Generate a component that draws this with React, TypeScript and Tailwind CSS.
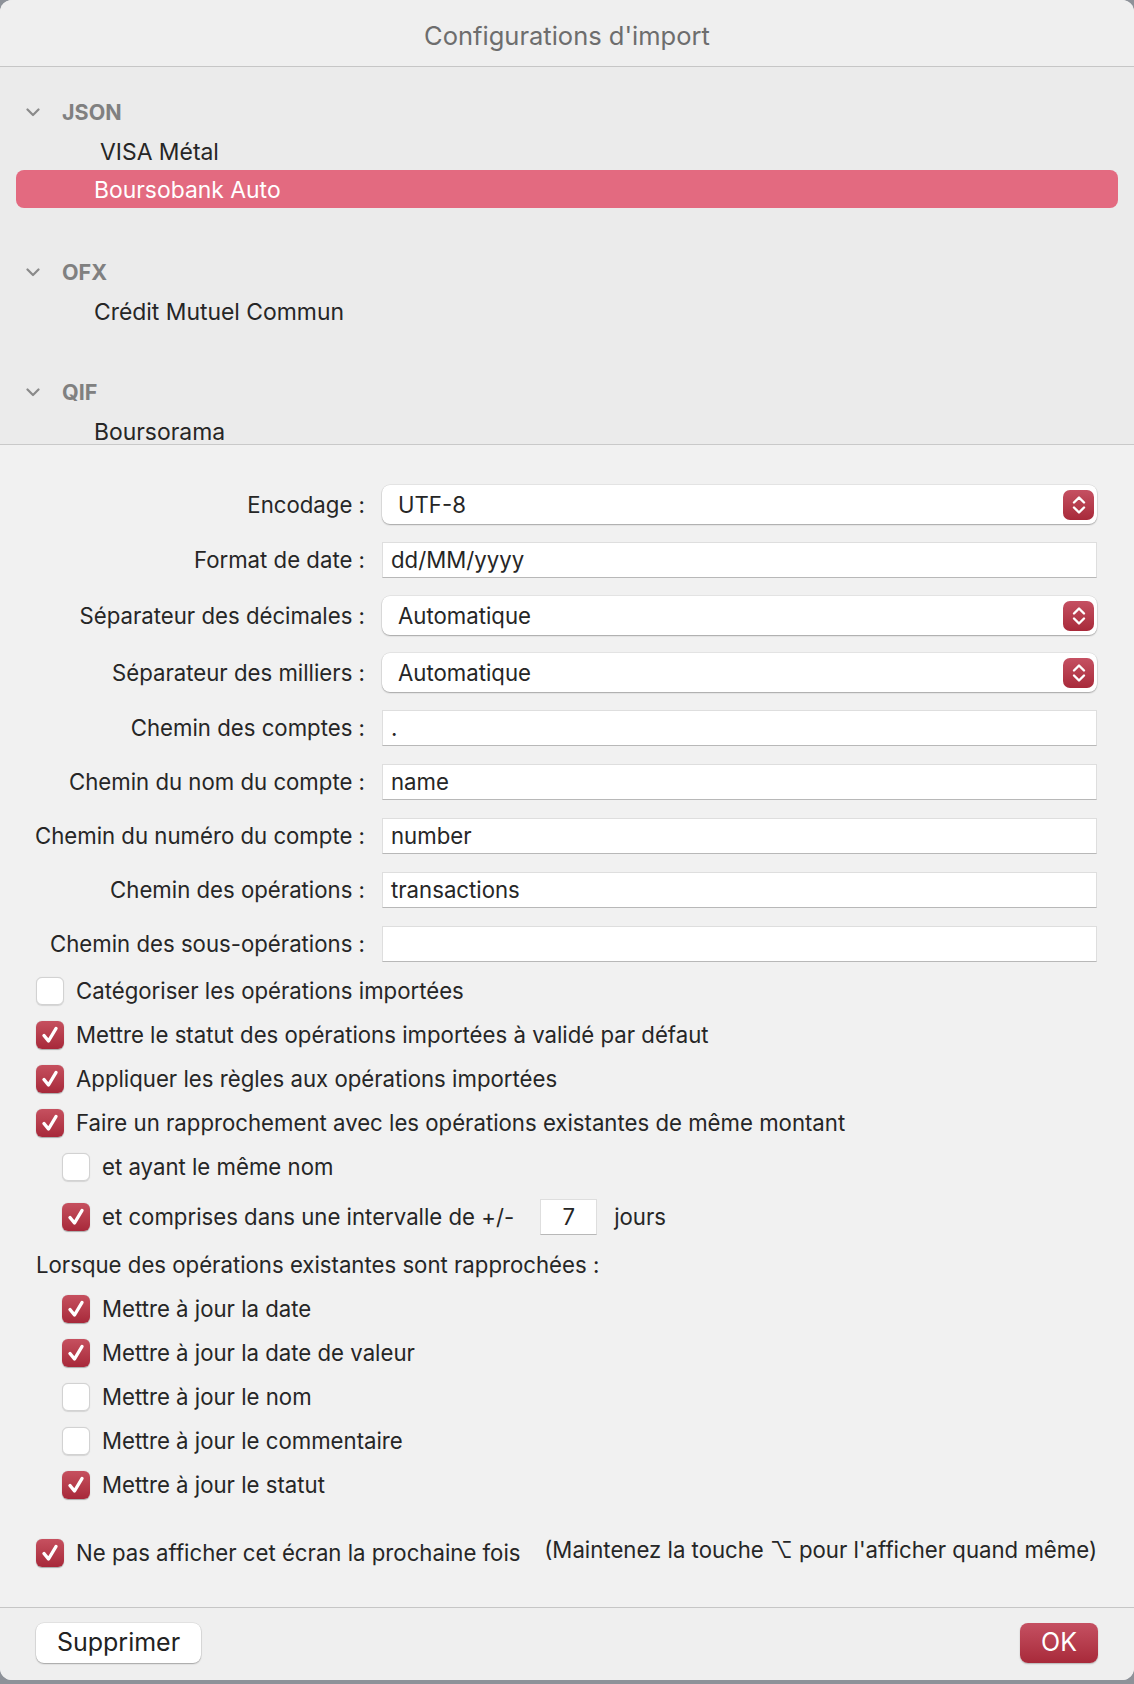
import { useState } from "react";

type Group = { name: string; items: string[] };

const groups: Group[] = [
  { name: "JSON", items: ["VISA Métal", "Boursobank Auto"] },
  { name: "OFX", items: ["Crédit Mutuel Commun"] },
  { name: "QIF", items: ["Boursorama"] },
];

const font = { fontFamily: "Inter, 'Noto Sans', 'DejaVu Sans', sans-serif" };

function Chevron() {
  return (
    <svg width="14" height="9" viewBox="0 0 14 9" className="shrink-0">
      <path
        d="M1.5 1.5 L7 7 L12.5 1.5"
        fill="none"
        stroke="#8a8a8a"
        strokeWidth="2.2"
        strokeLinecap="round"
        strokeLinejoin="round"
      />
    </svg>
  );
}

function Stepper() {
  return (
    <div className="absolute right-[3px] top-1/2 -translate-y-1/2 flex h-[30px] w-[31px] items-center justify-center rounded-[7px] bg-gradient-to-b from-[#c55062] to-[#a8293a]">
      <svg width="14" height="20" viewBox="0 0 14 20">
        <path
          d="M2 7.5 L7 2.5 L12 7.5 M2 12.5 L7 17.5 L12 12.5"
          fill="none"
          stroke="white"
          strokeWidth="2.4"
          strokeLinecap="round"
          strokeLinejoin="round"
        />
      </svg>
    </div>
  );
}

function Select({ value }: { value: string }) {
  return (
    <div className="relative flex h-[39px] flex-1 items-center rounded-[8px] bg-white pl-[16px] text-[22.2px] text-[#262626] shadow-[0_1px_1.5px_rgba(0,0,0,0.28),0_0_0_0.5px_rgba(0,0,0,0.1)]">
      {value}
      <Stepper />
    </div>
  );
}

function TextField({ value }: { value: string }) {
  return (
    <div className="flex h-[36px] flex-1 items-center border border-[#dedede] border-b-[#b8b8b8] bg-white pl-[8px] text-[22.2px] text-[#262626]">
      {value}
    </div>
  );
}

function Checkbox({ checked }: { checked: boolean }) {
  if (checked) {
    return (
      <div className="flex h-[28px] w-[28px] shrink-0 items-center justify-center rounded-[6px] bg-gradient-to-b from-[#c6505f] to-[#a7283a] shadow-[0_0.5px_1px_rgba(0,0,0,0.3)]">
        <svg width="22" height="22" viewBox="0 0 22 22">
          <path
            d="M5 11.5 L9.5 17 L17 4.5"
            fill="none"
            stroke="white"
            strokeWidth="3.4"
            strokeLinecap="round"
            strokeLinejoin="round"
          />
        </svg>
      </div>
    );
  }
  return (
    <div className="h-[28px] w-[28px] shrink-0 rounded-[6px] border border-[#d2d2d2] bg-white shadow-[0_0.5px_1px_rgba(0,0,0,0.12)]" />
  );
}

function CheckRow({
  label,
  checked,
  indent = false,
}: {
  label: string;
  checked: boolean;
  indent?: boolean;
}) {
  return (
    <div className={`flex h-[28px] items-center gap-[12px] ${indent ? "pl-[26px]" : ""}`}>
      <Checkbox checked={checked} />
      <span className="whitespace-nowrap text-[22.2px] text-[#262626]">{label}</span>
    </div>
  );
}

function FormRow({ label, children }: { label: string; children: React.ReactNode }) {
  return (
    <div className="flex items-center gap-[17px]">
      <div className="flex w-[329px] shrink-0 justify-end">
        <span className="whitespace-nowrap text-[22.2px] text-[#262626]">{label}</span>
      </div>
      {children}
    </div>
  );
}

export default function App() {
  const [selected, setSelected] = useState("Boursobank Auto");

  return (
    <div className="h-[1684px] w-[1134px] bg-[#8e9299]" style={font}>
      <div className="flex h-[1680px] flex-col overflow-hidden rounded-[12px] bg-[#f1f1f1]">
        {/* title bar */}
        <div className="flex h-[67px] shrink-0 items-center justify-center border-b border-[#c6c6c6] bg-[#efefef] pt-[6px] text-[25.5px] text-[#6d6d6d]">
          Configurations d'import
        </div>

        {/* list of saved configurations */}
        <div className="h-[378px] shrink-0 overflow-hidden border-b border-[#c9c9c9] bg-[#ebebeb] px-[16px] pt-[25px]">
          {groups.map((g, gi) => (
            <div key={g.name} className={gi === 1 ? "mt-[44px]" : gi === 2 ? "mt-[42px]" : ""}>
              <div className="flex h-[40px] items-center gap-[22px] pl-[10px]">
                <Chevron />
                <span className="text-[21.5px] font-bold text-[#808080]">{g.name}</span>
              </div>
              {g.items.map((item) => {
                const active = item === selected;
                return (
                  <div
                    key={item}
                    onClick={() => setSelected(item)}
                    className={`flex h-[38px] items-center rounded-[8px] pt-[2px] text-[22.9px] ${
                      item === "VISA Métal" ? "pl-[84px]" : "pl-[78px]"
                    } ${active ? "bg-[#e36a80] text-white" : "text-[#262626]"}`}
                  >
                    {item}
                  </div>
                );
              })}
            </div>
          ))}
        </div>

        {/* options */}
        <div className="flex flex-1 flex-col pl-[36px] pr-[37px] pt-[40px]">
          <div className="flex flex-col gap-[18px]">
            <FormRow label="Encodage :">
              <Select value="UTF-8" />
            </FormRow>
            <FormRow label="Format de date :">
              <TextField value="dd/MM/yyyy" />
            </FormRow>
            <FormRow label="Séparateur des décimales :">
              <Select value="Automatique" />
            </FormRow>
            <FormRow label="Séparateur des milliers :">
              <Select value="Automatique" />
            </FormRow>
            <FormRow label="Chemin des comptes :">
              <TextField value="." />
            </FormRow>
            <FormRow label="Chemin du nom du compte :">
              <TextField value="name" />
            </FormRow>
            <FormRow label="Chemin du numéro du compte :">
              <TextField value="number" />
            </FormRow>
            <FormRow label="Chemin des opérations :">
              <TextField value="transactions" />
            </FormRow>
            <FormRow label="Chemin des sous-opérations :">
              <TextField value="" />
            </FormRow>
          </div>

          <div className="mt-[15px] flex flex-col gap-[16px]">
            <CheckRow checked={false} label="Catégoriser les opérations importées" />
            <CheckRow checked label="Mettre le statut des opérations importées à validé par défaut" />
            <CheckRow checked label="Appliquer les règles aux opérations importées" />
            <CheckRow checked label="Faire un rapprochement avec les opérations existantes de même montant" />
            <CheckRow indent checked={false} label="et ayant le même nom" />
          </div>

          <div className="mt-[18px] flex h-[36px] items-center pl-[26px]">
            <Checkbox checked />
            <span className="ml-[12px] text-[22.2px] text-[#262626]">
              et comprises dans une intervalle de +/-
            </span>
            <div className="ml-[26px] flex h-[36px] w-[57px] items-center justify-center border border-[#dedede] border-b-[#b8b8b8] bg-white text-[22.2px] text-[#262626]">
              7
            </div>
            <span className="ml-[17px] text-[22.2px] text-[#262626]">jours</span>
          </div>

          <div className="mt-[16px] flex h-[28px] items-center text-[22.2px] text-[#262626]">
            Lorsque des opérations existantes sont rapprochées :
          </div>

          <div className="mt-[16px] flex flex-col gap-[16px]">
            <CheckRow indent checked label="Mettre à jour la date" />
            <CheckRow indent checked label="Mettre à jour la date de valeur" />
            <CheckRow indent checked={false} label="Mettre à jour le nom" />
            <CheckRow indent checked={false} label="Mettre à jour le commentaire" />
            <CheckRow indent checked label="Mettre à jour le statut" />
          </div>

          <div className="mt-[40px] flex h-[28px] items-center">
            <Checkbox checked />
            <span className="ml-[12px] whitespace-nowrap text-[22.2px] text-[#262626]">
              Ne pas afficher cet écran la prochaine fois
            </span>
            <span className="ml-auto -translate-y-[3px] whitespace-nowrap text-[22.2px] text-[#262626]">
              (Maintenez la touche ⌥ pour l'afficher quand même)
            </span>
          </div>
        </div>

        {/* footer buttons */}
        <div className="flex h-[73px] shrink-0 items-center justify-between border-t border-[#c6c6c6] bg-[#efefef] px-[36px] pb-[2px]">
          <button className="flex h-[40px] w-[165px] items-center justify-center rounded-[8px] bg-white text-[25px] text-[#222] shadow-[0_1px_1.5px_rgba(0,0,0,0.28),0_0_0_0.5px_rgba(0,0,0,0.1)]">
            Supprimer
          </button>
          <button className="flex h-[40px] w-[78px] items-center justify-center rounded-[8px] bg-gradient-to-b from-[#c55062] to-[#a8293a] text-[25px] text-white shadow-[0_1px_1.5px_rgba(0,0,0,0.25)]">
            OK
          </button>
        </div>
      </div>
    </div>
  );
}
